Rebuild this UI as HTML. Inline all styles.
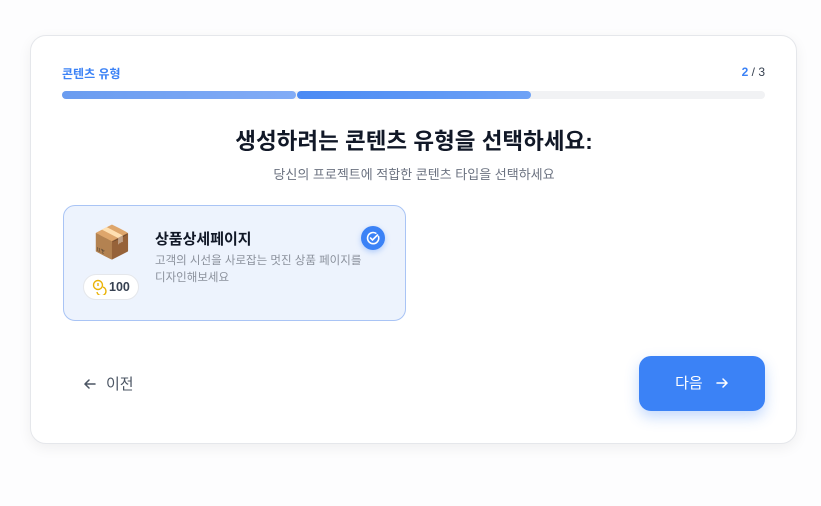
<!DOCTYPE html>
<html><head><meta charset="utf-8"><style>
*{box-sizing:border-box;margin:0;padding:0}
body{width:821px;height:506px;background:#fdfdfe;font-family:"Liberation Sans","Noto Sans CJK KR",sans-serif;position:relative;overflow:hidden}
.card{position:absolute;left:30px;top:35px;width:767px;height:409px;background:#fff;border:1px solid #e5e7eb;border-radius:16px;box-shadow:0 4px 14px rgba(0,0,0,0.06)}
.abs{position:absolute}
</style></head><body>
<div class="card">
<div class="abs" style="left:31px;top:29px;font-size:12px;font-weight:700;color:#3b82f6">콘텐츠 유형</div>
<div class="abs" style="right:31px;top:29px;font-size:12px;color:#374151"><span style="color:#3b82f6;font-weight:700">2</span> / 3</div>
<div class="abs" style="left:31px;top:55px;width:703px;height:8px;border-radius:4px;background:#f1f2f4"></div>
<div class="abs" style="left:31px;top:55px;width:234px;height:8px;border-radius:4px;background:linear-gradient(90deg,#6a9cf0,#82acf6)"></div>
<div class="abs" style="left:266px;top:55px;width:234px;height:8px;border-radius:4px;background:linear-gradient(90deg,#4a8af4,#6ea2f6)"></div>
<div class="abs" style="left:0;width:766px;top:88px;text-align:center;font-size:22.5px;font-weight:700;color:#111827">생성하려는 콘텐츠 유형을 선택하세요:</div>
<div class="abs" style="left:0;width:766px;top:128px;text-align:center;font-size:13px;color:#6b7280">당신의 프로젝트에 적합한 콘텐츠 타입을 선택하세요</div>
<div class="abs" style="left:32px;top:169px;width:343px;height:116px;border:1px solid #a9c4f5;border-radius:12px;background:#edf3fd">
 <div class="abs" style="left:28px;top:16px;font-size:32px;line-height:40px">📦</div>
 <div class="abs" style="left:19px;top:68px;width:56px;height:26px;border-radius:13px;background:#fff;border:1px solid #e5e7eb;font-size:12.5px;font-weight:600;color:#374151;padding:5px 0 0 25px">100</div>
 <svg class="abs" style="left:28px;top:73px" width="15" height="16" viewBox="0 0 15 16" fill="none" stroke="#eab308" stroke-width="1.4"><circle cx="6" cy="6" r="4.5"/><path d="M6 4v3"/><path d="M11 8a4.5 4.5 0 1 1-6 5"/></svg>
 <div class="abs" style="left:91px;top:22px;font-size:15px;font-weight:700;color:#111827">상품상세페이지</div>
 <div class="abs" style="left:91px;top:47px;width:215px;font-size:11.5px;line-height:17px;color:#8b919c">고객의 시선을 사로잡는 멋진 상품 페이지를 디자인해보세요</div>
 <div class="abs" style="left:297px;top:20px;width:24px;height:24px;border-radius:12px;background:#3b82f6;box-shadow:0 2px 6px rgba(59,130,246,.35)"><svg width="24" height="24" viewBox="0 0 24 24" fill="none" stroke="#fff" stroke-width="1.6" stroke-linecap="round"><path d="M17.5 10.5A5.6 5.6 0 1 1 14.8 7.2"/><path d="M9.5 12l2 2 5-5"/></svg></div>
</div>
<div class="abs" style="left:52px;top:337px;font-size:15px;color:#4b5563">
<svg width="14" height="14" viewBox="0 0 14 14" fill="none" stroke="#4b5563" stroke-width="1.5" stroke-linecap="round" style="vertical-align:-2px;margin-right:9px"><path d="M12 7H2M6 3L2 7l4 4"/></svg>이전</div>
<div class="abs" style="left:608px;top:320px;width:126px;height:55px;border-radius:12px;background:#3b82f6;box-shadow:0 6px 14px rgba(59,130,246,.3);color:#fff;font-size:15px;text-align:center;line-height:55px">다음 <svg width="14" height="14" viewBox="0 0 14 14" fill="none" stroke="#fff" stroke-width="1.5" stroke-linecap="round" style="vertical-align:-2px;margin-left:8px"><path d="M2 7h10M8 3l4 4-4 4"/></svg></div>
</div>
</body></html>
